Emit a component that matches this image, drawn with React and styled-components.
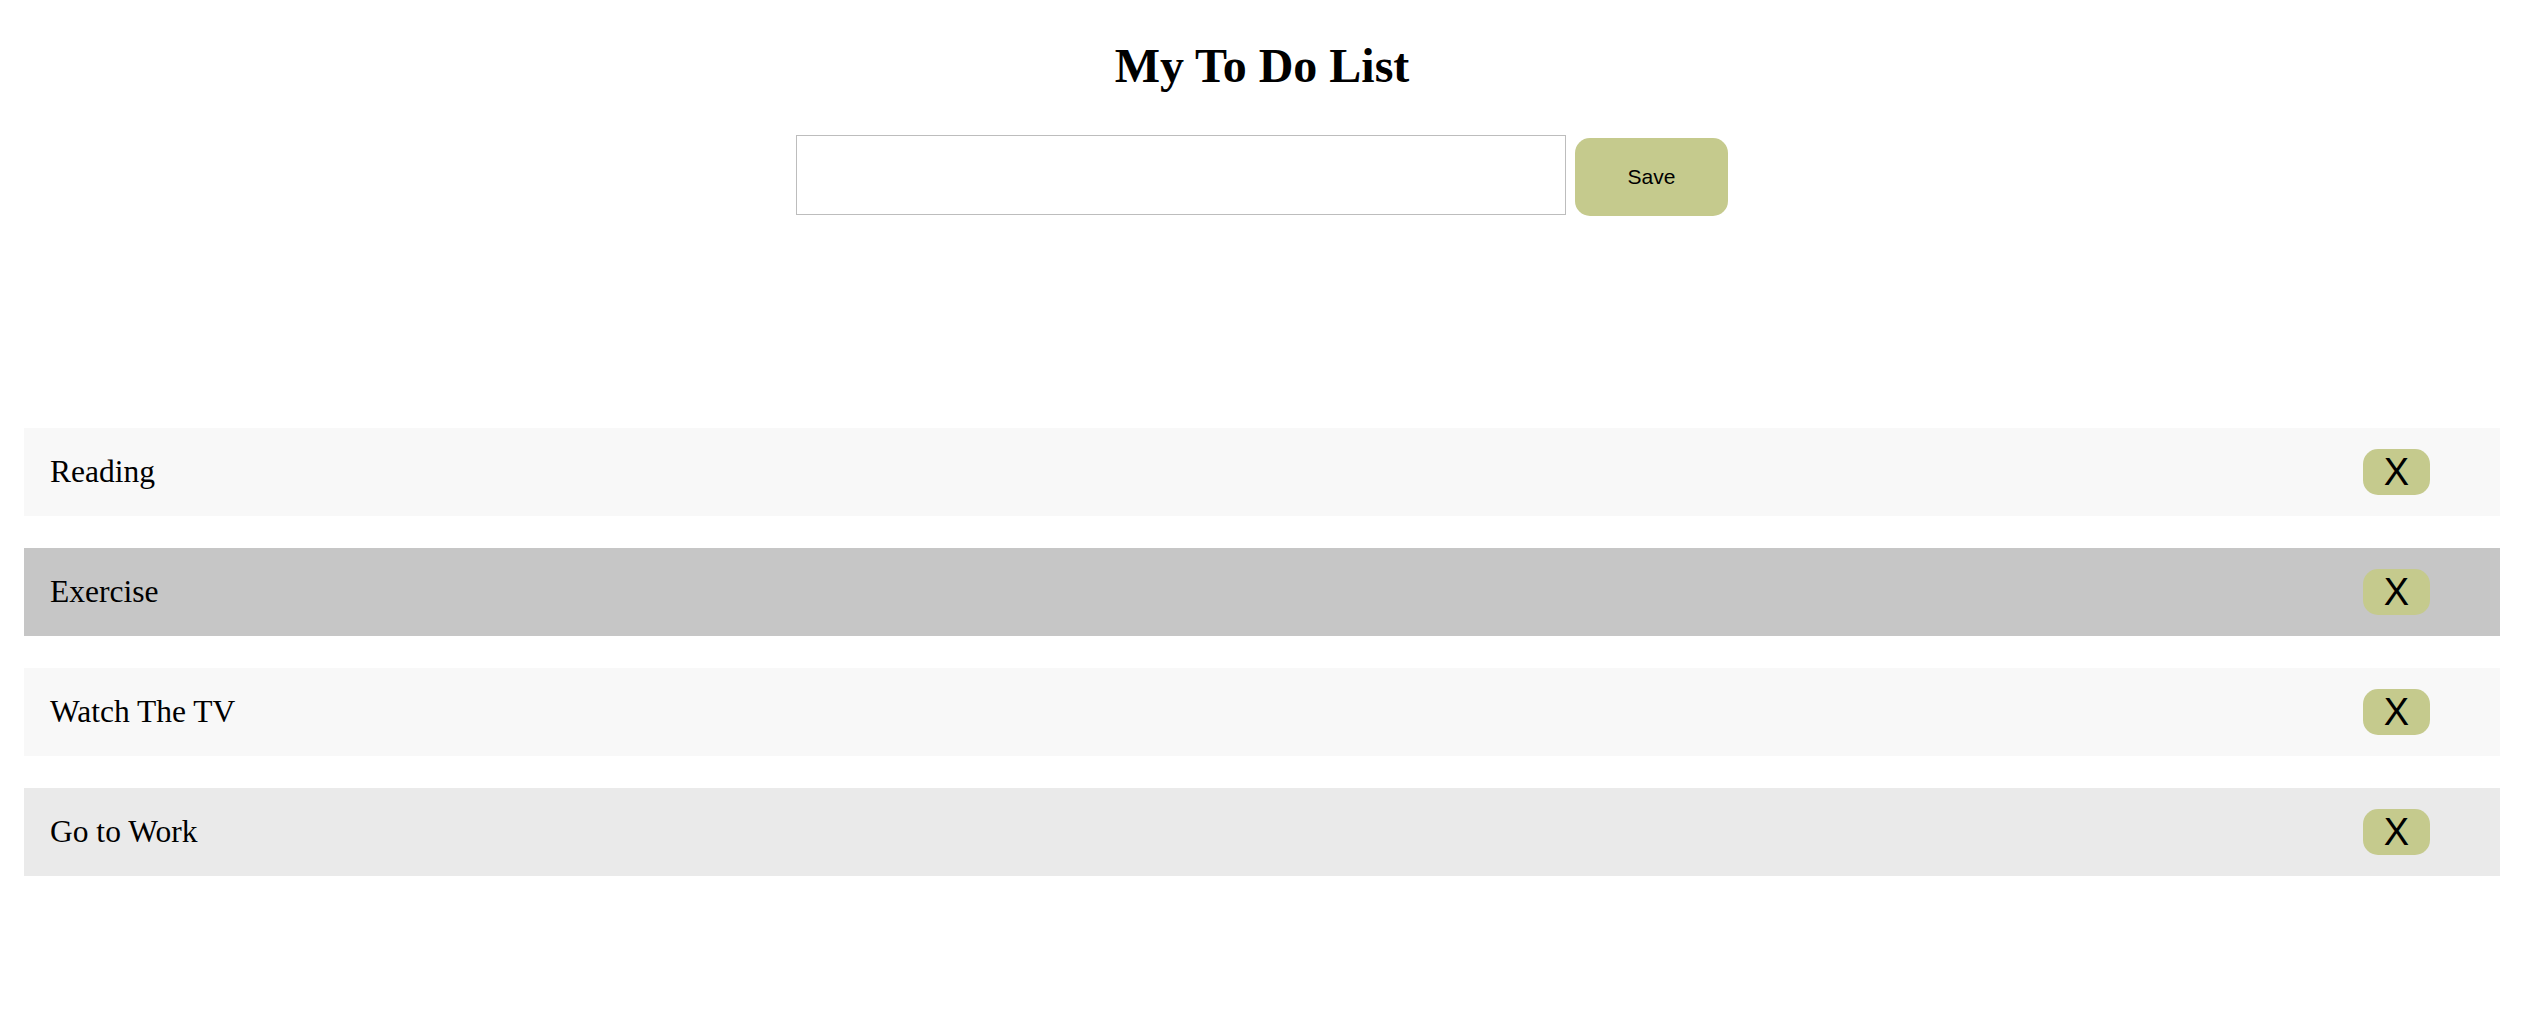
import React, { useState } from "react";
import styled, { createGlobalStyle } from "styled-components";

const GlobalStyle = createGlobalStyle`
  body {
    margin: 0;
    background: #fff;
    font-family: "Liberation Serif", "Times New Roman", serif;
    color: #000;
  }
`;

const Page = styled.div`
  display: flex;
  flex-direction: column;
  padding: 39px 22px 0 24px;
`;

const Title = styled.h1`
  margin: 0;
  text-align: center;
  font-size: 48px;
  line-height: 53px;
  font-weight: bold;
`;

const Form = styled.form`
  display: flex;
  justify-content: center;
  align-items: flex-start;
  gap: 9px;
  margin-top: 43px;
`;

const Input = styled.input`
  box-sizing: border-box;
  width: 770px;
  height: 80px;
  border: 1px solid #bdbdbd;
  padding: 0 12px;
  font-size: 24px;
  outline: none;
`;

const SaveButton = styled.button`
  width: 153px;
  height: 78px;
  margin-top: 3px;
  border: none;
  border-radius: 15px;
  background: #c5ca8d;
  font-family: "Liberation Sans", Arial, sans-serif;
  font-size: 21px;
  color: #000;
`;

const List = styled.ul`
  list-style: none;
  margin: 212px 0 0 0;
  padding: 0;
  display: flex;
  flex-direction: column;
  gap: 32px;
`;

const Row = styled.li`
  display: flex;
  align-items: center;
  justify-content: space-between;
  height: 88px;
  padding: 0 70px 0 26px;
  background: ${(p) => p.$bg};
  font-size: 31.5px;
`;

const DeleteButton = styled.button`
  width: 67px;
  height: 46px;
  border: none;
  border-radius: 15px;
  background: #c5ca8d;
  padding: 0;
  font-family: "Liberation Sans", Arial, sans-serif;
  font-size: 38px;
  line-height: 46px;
  color: #000;
`;

const initialTodos = [
  { id: 1, text: "Reading", bg: "#f8f8f8" },
  { id: 2, text: "Exercise", bg: "#c6c6c6" },
  { id: 3, text: "Watch The TV", bg: "#f8f8f8" },
  { id: 4, text: "Go to Work", bg: "#eaeaea" },
];

export default function App() {
  const [todos, setTodos] = useState(initialTodos);
  const [value, setValue] = useState("");

  const save = (e) => {
    e.preventDefault();
    if (!value.trim()) return;
    setTodos([...todos, { id: Date.now(), text: value, bg: "#f8f8f8" }]);
    setValue("");
  };

  return (
    <Page>
      <GlobalStyle />
      <Title>My To Do List</Title>
      <Form onSubmit={save}>
        <Input value={value} onChange={(e) => setValue(e.target.value)} />
        <SaveButton type="submit">Save</SaveButton>
      </Form>
      <List>
        {todos.map((todo) => (
          <Row key={todo.id} $bg={todo.bg}>
            <span>{todo.text}</span>
            <DeleteButton
              onClick={() => setTodos(todos.filter((t) => t.id !== todo.id))}
            >
              X
            </DeleteButton>
          </Row>
        ))}
      </List>
    </Page>
  );
}
